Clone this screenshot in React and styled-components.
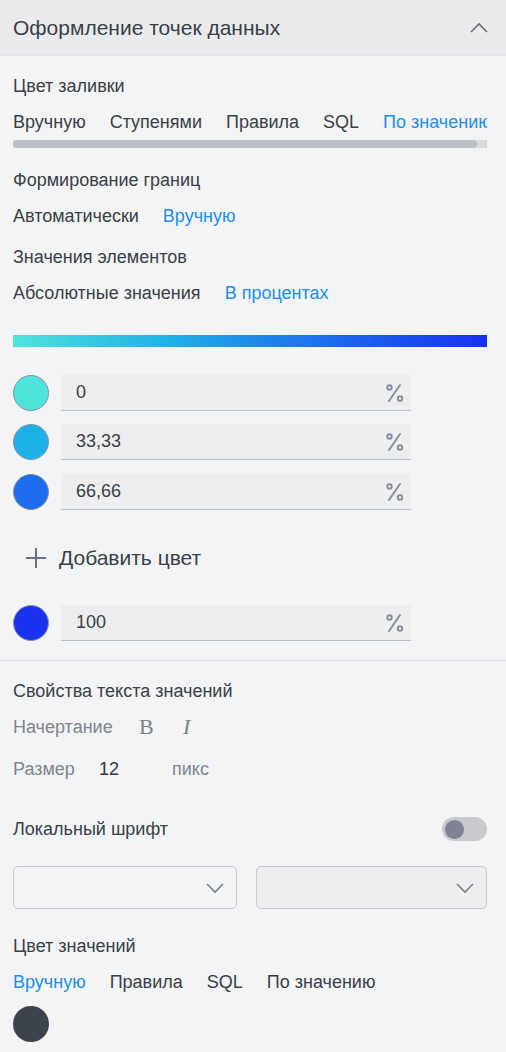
import React from 'react';
import styled, { createGlobalStyle } from 'styled-components';

const Global = createGlobalStyle`
  body {
    margin: 0;
    background: #f3f4f6;
    font-family: "Liberation Sans", Arial, sans-serif;
    color: #3a3f47;
  }
`;

const Panel = styled.div`
  width: 506px;
  background: #f3f4f6;
`;

const Header = styled.header`
  height: 55px;
  border-bottom: 1px solid #e4e5e8;
  background: #eaebed;
  display: flex;
  align-items: center;
  justify-content: space-between;
  padding: 0 17px 0 13px;
`;

const Title = styled.h2`
  margin: 0;
  font-size: 21px;
  font-weight: 400;
  color: #3a3f47;
`;

const Section = styled.section`
  padding: ${(p) => p.$pt || 0}px 19px 0 13px;
  border-top: ${(p) => (p.$divider ? '1px solid #dcdde0' : 'none')};
`;

const Label = styled.div`
  line-height: 36px;
  font-size: 18px;
  margin-top: ${(p) => p.$mt || 0}px;
  color: #3a3f47;
`;

const Tabs = styled.div`
  display: flex;
  gap: 24px;
  line-height: 36px;
  font-size: 18px;
  white-space: nowrap;
  overflow: hidden;
`;

const Tab = styled.span`
  flex: none;
  color: ${(p) => (p.$active ? '#1e8fea' : '#3a3f47')};
`;

const ScrollTrack = styled.div`
  height: 8px;
  background: #d9dbdf;
`;

const ScrollThumb = styled.div`
  height: 8px;
  width: 464px;
  border-radius: 4px;
  background: #bcc0c7;
`;

const Gradient = styled.div`
  margin-top: 24px;
  height: 12px;
  background: linear-gradient(90deg, #4ee4db 0%, #1eb1e8 33%, #1d6cee 66%, #1a30ef 100%);
`;

const StopRow = styled.div`
  display: flex;
  align-items: center;
  gap: 12px;
  height: 36px;
  margin-top: ${(p) => p.$mt}px;
`;

const Swatch = styled.div`
  width: 36px;
  height: 36px;
  flex: none;
  border-radius: 50%;
  box-sizing: border-box;
  border: 1px solid #8e93a0;
  background: ${(p) => p.$color};
`;

const Field = styled.div`
  width: 350px;
  height: 36px;
  box-sizing: border-box;
  background: #edeef0;
  border-bottom: 1px solid #bdc0c6;
  display: flex;
  align-items: center;
  justify-content: space-between;
  padding: 0 6px 0 15px;
  font-size: 18px;
  color: #3a3f47;
`;

const AddButton = styled.div`
  display: flex;
  align-items: center;
  gap: 12px;
  height: 40px;
  margin-top: 28px;
  padding-left: 12px;
  font-size: 21px;
  color: #3a3f47;
`;

const StyleRow = styled.div`
  display: flex;
  align-items: center;
  line-height: 36px;
  font-size: 18px;
  margin-top: ${(p) => p.$mt || 0}px;
`;

const Muted = styled.span`
  color: #7f8490;
  width: ${(p) => (p.$w ? `${p.$w}px` : 'auto')};
`;

const Glyph = styled.span`
  font-family: "Liberation Serif", serif;
  font-size: 22px;
  color: #7d8290;
  font-style: ${(p) => (p.$italic ? 'italic' : 'normal')};
  width: ${(p) => p.$w}px;
`;

const Value = styled.span`
  color: #2f343b;
  width: 73px;
`;

const ToggleLine = styled.div`
  display: flex;
  align-items: center;
  justify-content: space-between;
  line-height: 36px;
  font-size: 18px;
  margin-top: 24px;
`;

const Toggle = styled.div`
  width: 45px;
  height: 24px;
  border-radius: 12px;
  background: #c9cace;
  display: flex;
  align-items: center;
  padding-left: 3px;
  box-sizing: border-box;

  &::after {
    content: '';
    width: 19px;
    height: 19px;
    border-radius: 50%;
    background: #7e8292;
  }
`;

const Selects = styled.div`
  display: flex;
  gap: 19px;
  margin-top: 19px;
`;

const Select = styled.div`
  height: 43px;
  width: ${(p) => p.$w}px;
  box-sizing: border-box;
  border: 1px solid #c8cace;
  border-radius: 5px;
  background: ${(p) => (p.$filled ? '#edeef0' : 'transparent')};
  display: flex;
  align-items: center;
  justify-content: flex-end;
  padding-right: 11px;
`;

const Dot = styled.div`
  width: 36px;
  height: 36px;
  border-radius: 50%;
  background: #3c434b;
  margin-top: 6px;
`;

const Percent = () => (
  <svg width="20" height="20" viewBox="0 0 20 20" fill="none" stroke="#8b8f9b" strokeWidth="2">
    <line x1="4" y1="18" x2="15" y2="2" strokeLinecap="round" />
    <circle cx="4.5" cy="4.5" r="2.2" />
    <circle cx="15" cy="15.5" r="2.2" />
  </svg>
);

const Chevron = ({ up }) => (
  <svg width="20" height="12" viewBox="0 0 20 12" fill="none" stroke={up ? '#6c707a' : '#7d818c'} strokeWidth="1.6">
    <polyline points={up ? '2,10 10,2 18,10' : '2,2 10,10 18,2'} />
  </svg>
);

const Plus = () => (
  <svg width="22" height="22" viewBox="0 0 22 22" stroke="#6b7080" strokeWidth="2">
    <line x1="11" y1="1" x2="11" y2="21" />
    <line x1="1" y1="11" x2="21" y2="11" />
  </svg>
);

const stops = [
  { color: '#4ee4db', value: '0', mt: 28 },
  { color: '#1eb1e8', value: '33,33', mt: 13 },
  { color: '#1d6cee', value: '66,66', mt: 14 },
];

const Stop = ({ color, value, mt }) => (
  <StopRow $mt={mt}>
    <Swatch $color={color} />
    <Field>
      {value}
      <Percent />
    </Field>
  </StopRow>
);

export default function App() {
  return (
    <Panel>
      <Global />
      <Header>
        <Title>Оформление точек данных</Title>
        <Chevron up />
      </Header>
      <Section>
        <Label $mt={12}>Цвет заливки</Label>
        <Tabs>
          <Tab>Вручную</Tab>
          <Tab>Ступенями</Tab>
          <Tab>Правила</Tab>
          <Tab>SQL</Tab>
          <Tab $active>По значению</Tab>
        </Tabs>
        <ScrollTrack>
          <ScrollThumb />
        </ScrollTrack>
        <Label $mt={14}>Формирование границ</Label>
        <Tabs>
          <Tab>Автоматически</Tab>
          <Tab $active>Вручную</Tab>
        </Tabs>
        <Label $mt={5}>Значения элементов</Label>
        <Tabs>
          <Tab>Абсолютные значения</Tab>
          <Tab $active>В процентах</Tab>
        </Tabs>
        <Gradient />
        {stops.map((s) => (
          <Stop key={s.value} {...s} />
        ))}
        <AddButton>
          <Plus />
          Добавить цвет
        </AddButton>
        <Stop color="#1a33ef" value="100" mt={27} />
        <div style={{ height: 19 }} />
      </Section>
      <Section $divider $pt={12}>
        <Label>Свойства текста значений</Label>
        <StyleRow>
          <Muted $w={126}>Начертание</Muted>
          <Glyph $w={44}>B</Glyph>
          <Glyph $italic $w={20}>I</Glyph>
        </StyleRow>
        <StyleRow $mt={6}>
          <Muted $w={86}>Размер</Muted>
          <Value>12</Value>
          <Muted>пикс</Muted>
        </StyleRow>
        <ToggleLine>
          Локальный шрифт
          <Toggle />
        </ToggleLine>
        <Selects>
          <Select $w={224}>
            <Chevron />
          </Select>
          <Select $w={231} $filled>
            <Chevron />
          </Select>
        </Selects>
        <Label $mt={19}>Цвет значений</Label>
        <Tabs>
          <Tab $active>Вручную</Tab>
          <Tab>Правила</Tab>
          <Tab>SQL</Tab>
          <Tab>По значению</Tab>
        </Tabs>
        <Dot />
      </Section>
    </Panel>
  );
}
